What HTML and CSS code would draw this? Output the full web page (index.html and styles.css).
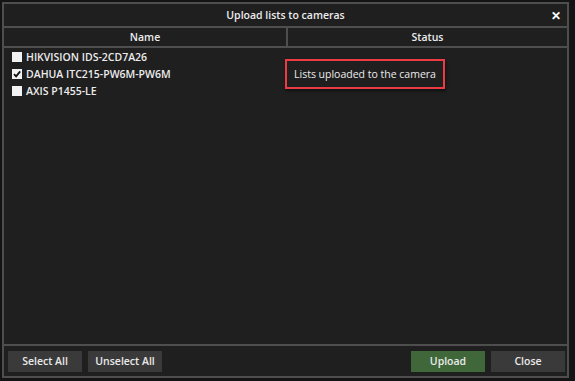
FILE: index.html
```html
<!DOCTYPE html>
<html lang="en">
<head>
    <meta charset="UTF-8">
    <title>Upload lists to cameras</title>
    <link rel="stylesheet" href="styles.css">
</head>
<body>
    <div class="dialog">
        <div class="dialog-title">
            <span>Upload lists to cameras</span>
            <span class="close-x">&#x2715;</span>
        </div>

        <div class="grid-head">
            <div class="col-name">Name</div>
            <div class="col-status">Status</div>
        </div>

        <div class="grid-body">
            <div class="cam-row">
                <div class="cell-name"><span class="check"></span>HIKVISION IDS-2CD7A26</div>
                <div class="cell-status"></div>
            </div>
            <div class="cam-row">
                <div class="cell-name">
                    <span class="check">
                        <svg viewBox="0 0 10 10" width="10" height="10"><path d="M2 5.2 L4.1 7.4 L8.2 2.4" fill="none" stroke="#111" stroke-width="1.8"/></svg>
                    </span>DAHUA ITC215-PW6M-PW6M
                </div>
                <div class="cell-status"><span class="status-mark">Lists uploaded to the camera</span></div>
            </div>
            <div class="cam-row">
                <div class="cell-name"><span class="check"></span>AXIS P1455-LE</div>
                <div class="cell-status"></div>
            </div>
        </div>

        <div class="dialog-footer">
            <button class="btn">Select All</button>
            <button class="btn">Unselect All</button>
            <span class="spacer"></span>
            <button class="btn btn-green">Upload</button>
            <button class="btn">Close</button>
        </div>
    </div>
</body>
</html>
```

FILE: styles.css
```css
* {
    margin: 0;
    padding: 0;
    box-sizing: border-box;
}

body {
    font-family: 'Open Sans', 'Noto Sans', sans-serif;
    font-size: 10.5px;
    background: #141414;
    color: #ececec;
    padding: 2px;
    width: 575px;
    height: 381px;
    overflow: hidden;
}

.dialog {
    width: 567px;
    height: 376px;
    background: #1f1f1f;
    border: 2px solid #4e4e4e;
    display: flex;
    flex-direction: column;
}

.dialog-title {
    height: 24px;
    border-bottom: 2px solid #4e4e4e;
    display: flex;
    align-items: center;
    justify-content: center;
    position: relative;
    font-weight: 600;
}

.close-x {
    position: absolute;
    right: 6px;
    top: 3px;
    font-size: 12px;
    font-weight: bold;
    color: #fff;
}

.grid-head {
    height: 20px;
    border-bottom: 2px solid #4e4e4e;
    display: grid;
    grid-template-columns: 284px 1fr;
    font-weight: 600;
}

.grid-head div {
    display: flex;
    align-items: center;
    justify-content: center;
}

.col-name {
    border-right: 2px solid #4e4e4e;
}

.grid-body {
    flex: 1;
    border-bottom: 2px solid #4e4e4e;
}

.cam-row {
    display: grid;
    grid-template-columns: 284px 1fr;
    height: 17px;
    align-items: center;
    font-weight: 600;
}

.cell-name {
    display: flex;
    align-items: center;
    padding-left: 8px;
}

.check {
    width: 10px;
    height: 10px;
    background: #f2f2f2;
    margin-right: 4px;
    display: inline-flex;
    align-items: center;
    justify-content: center;
}

.cell-status {
    padding-left: 6px;
    font-weight: 400;
}

.status-mark {
    padding: 6px 7px;
    margin-left: -9px;
    border: 2px solid #ec3b42;
    box-shadow: 1px 2px 3px rgba(0, 0, 0, 0.5);
}

.dialog-footer {
    height: 30px;
    display: flex;
    align-items: center;
    gap: 6px;
    padding: 0 2px 0 4px;
}

.spacer {
    flex: 1;
}

.btn {
    width: 74px;
    height: 21px;
    background: #3a3a3a;
    border: none;
    color: #eaeaea;
    font-family: inherit;
    font-size: 10.5px;
    font-weight: 600;
}

.btn-green {
    background: #3f673a;
}
```
